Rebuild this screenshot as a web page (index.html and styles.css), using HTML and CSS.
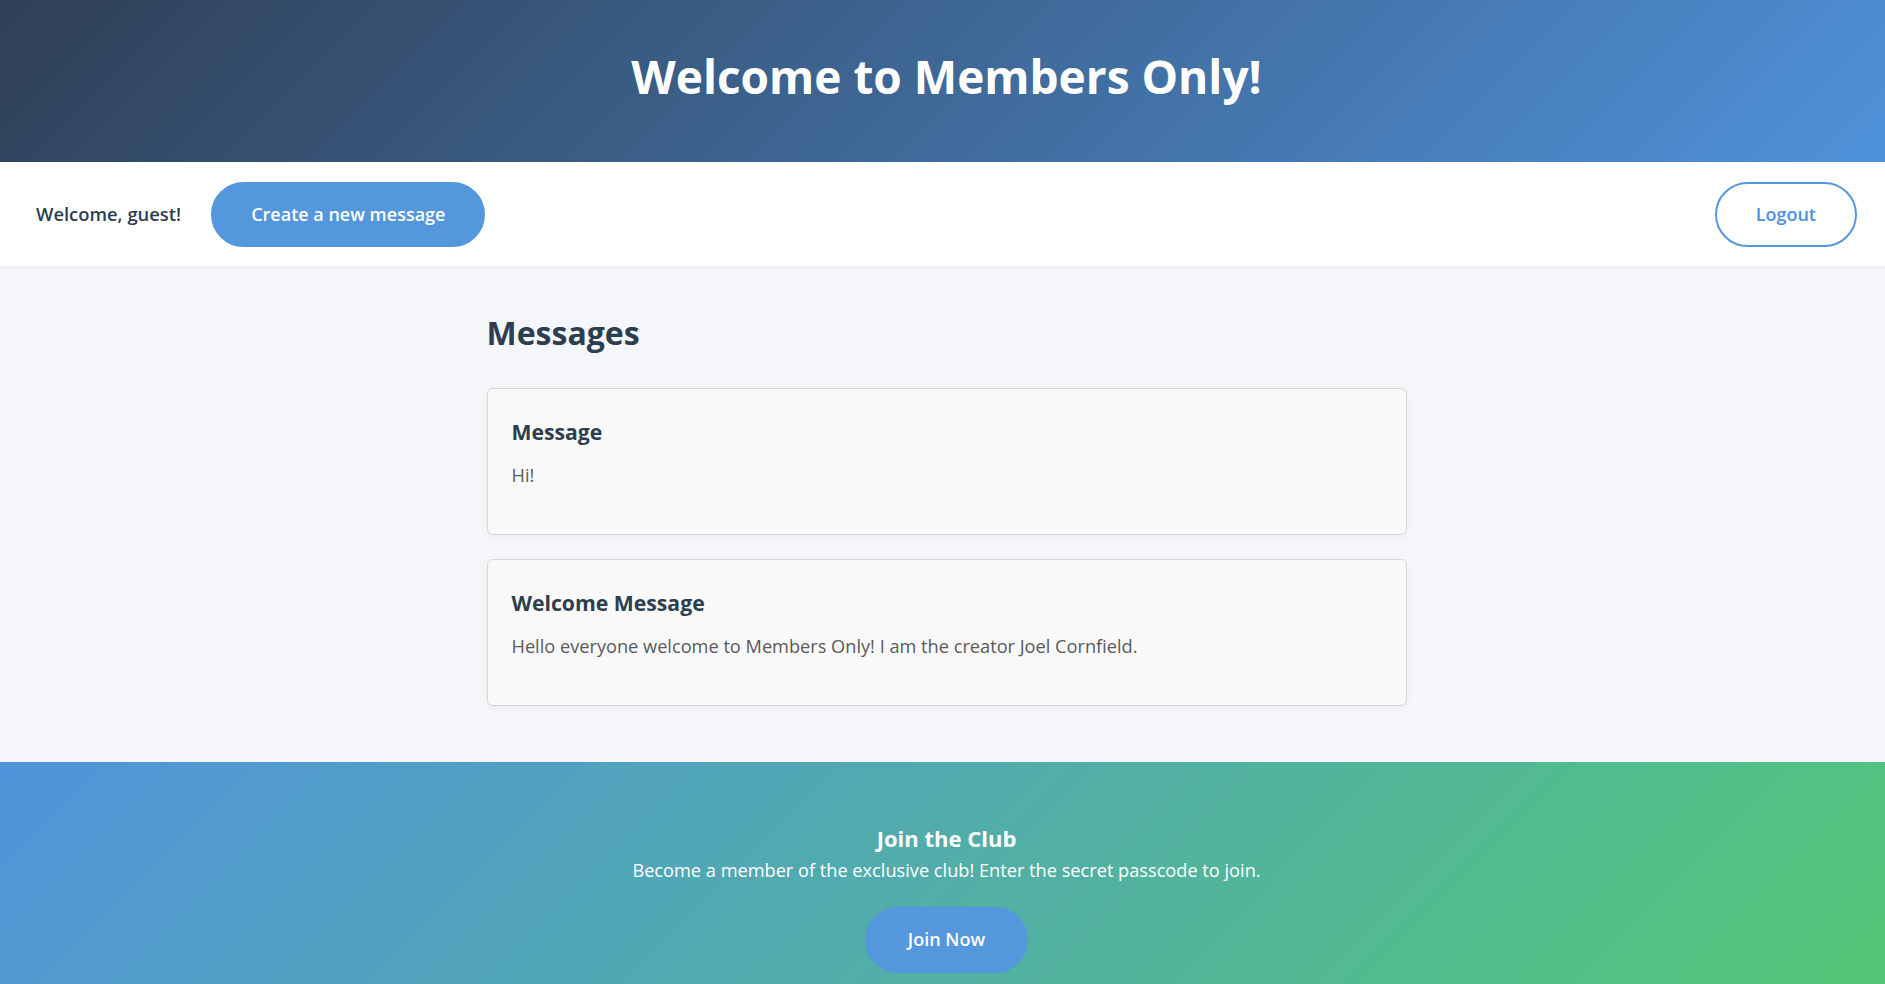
FILE: index.html
```html
<!DOCTYPE html>
<html lang="en">
<head>
<meta charset="utf-8">
<title>Members Only</title>
<link rel="stylesheet" href="styles.css">
</head>
<body>
<div class="page">
  <header class="hero">
    <h1 class="hero-title">Welcome to Members Only!</h1>
  </header>
  <nav class="nav">
    <div class="nav-left">
      <span class="nav-greeting">Welcome, guest!</span>
      <a class="btn btn-solid" href="#">Create a new message</a>
    </div>
    <a class="btn btn-outline" href="#">Logout</a>
  </nav>
  <main class="main">
    <section class="messages">
      <h2 class="messages-title">Messages</h2>
      <article class="card">
        <h3 class="card-title">Message</h3>
        <p class="card-text">Hi!</p>
      </article>
      <article class="card">
        <h3 class="card-title">Welcome Message</h3>
        <p class="card-text">Hello everyone welcome to Members Only! I am the creator Joel Cornfield.</p>
      </article>
    </section>
  </main>
  <footer class="join">
    <h3 class="join-title">Join the Club</h3>
    <p class="join-text">Become a member of the exclusive club! Enter the secret passcode to join.</p>
    <a class="btn btn-solid btn-join" href="#">Join Now</a>
  </footer>
</div>
</body>
</html>
```
FILE: styles.css
```css
html {
  overflow-x: hidden;
}
body {
  margin: 0;
  font-family: "Open Sans", "Noto Sans", sans-serif;
  line-height: 1.6;
  color: #2c3e50;
  background: #f5f6fa;
}
.page {
  width: 1893px;
}
.hero {
  height: 162px;
  box-sizing: border-box;
  padding-bottom: 8px;
  display: flex;
  align-items: center;
  justify-content: center;
  background: linear-gradient(135deg, #2f3f55, #4f92da);
}
.hero-title {
  margin: 0;
  color: #ffffff;
  font-size: 46px;
  font-weight: 700;
  line-height: 1.2;
}
.nav {
  height: 104px;
  box-sizing: border-box;
  padding: 0 36px;
  display: flex;
  align-items: center;
  justify-content: space-between;
  background: #ffffff;
  box-shadow: 0 2px 4px rgba(0, 0, 0, 0.04);
}
.nav-left {
  display: flex;
  align-items: center;
  gap: 30px;
}
.nav-greeting {
  font-size: 18.4px;
  font-weight: 600;
  color: #2c3e50;
}
.btn {
  display: inline-block;
  padding: 17px 38px;
  border: 2px solid #5497dd;
  border-radius: 40px;
  font-size: 18px;
  line-height: 27px;
  font-weight: 600;
  text-decoration: none;
}
.btn-solid {
  background: #5497dd;
  color: #ffffff;
}
.btn-outline {
  padding: 17px 39px;
  background: #ffffff;
  color: #4a90e2;
}
.btn-join {
  padding: 17px 41px 18px;
}
.main {
  padding: 48px 0 32px;
}
.messages {
  width: 920px;
  margin: 0 auto;
}
.messages-title {
  margin: 0 0 36px;
  font-size: 32px;
  line-height: 1.2;
  font-weight: 700;
  color: #2c3e50;
}
.card {
  margin-bottom: 24px;
  padding: 29px 24px 25px;
  background: #f9f9f9;
  border: 1px solid #d6d6d6;
  border-radius: 6px;
  box-shadow: 0 2px 6px rgba(0, 0, 0, 0.04);
}
.card-title {
  margin: 0 0 15px;
  font-size: 21.2px;
  line-height: 1.3;
  font-weight: 700;
  color: #2c3e50;
}
.card-text {
  margin: 0 0 19px;
  font-size: 18.2px;
  color: #5a5a5a;
}
.join {
  padding: 62px 0 48px;
  text-align: center;
  color: #ffffff;
  background: linear-gradient(135deg, #5094db, #53c874);
}
.join-title {
  margin: 0 0 4px;
  font-size: 22px;
  line-height: 1.3;
  font-weight: 700;
}
.join-text {
  margin: 0 0 22px;
  font-size: 18.2px;
}
```
